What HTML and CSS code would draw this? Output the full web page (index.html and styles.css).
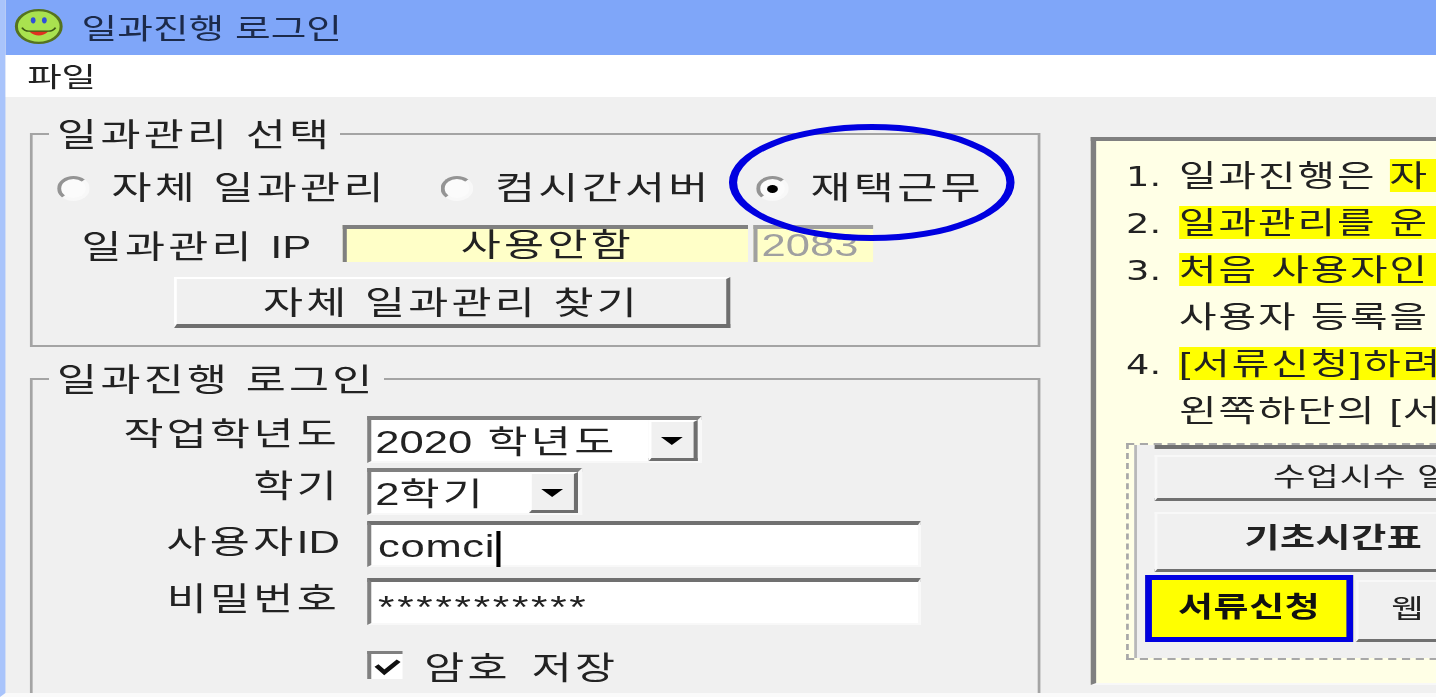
FILE: index.html
```html
<!DOCTYPE html>
<html lang="ko">
<head>
    <meta charset="UTF-8">
    <title>일과진행 로그인</title>
    <link rel="stylesheet" href="styles.css">
</head>
<body>
    <div class="window">
        <div class="title-bar">
            <svg class="smiley" viewBox="0 0 36 36">
                <circle cx="18" cy="18" r="16" fill="#a9e24f" stroke="#55731f" stroke-width="2.2"/>
                <ellipse cx="14" cy="12" rx="1.7" ry="3" fill="#2f4fd8"/>
                <ellipse cx="22" cy="12" rx="1.7" ry="3" fill="#2f4fd8"/>
                <path d="M11 22.5 Q18 31 25 22.5 Z" fill="#e03020"/>
                <path d="M6 19 Q8 22.5 11 22.5 L25 22.5 Q28 22.5 30 19" fill="none" stroke="#3d5a14" stroke-width="1.4"/>
            </svg>
            <span>일과진행 로그인</span>
        </div>
        <div class="menu-bar">파일</div>
        <div class="content">
            <div class="left-col">
                <fieldset class="group">
                    <legend>일과관리 선택</legend>
                    <div class="mode-row">
                        <label class="option"><i class="radio"></i>자체 일과관리</label>
                        <label class="option"><i class="radio"></i>컴시간서버</label>
                        <label class="option"><i class="radio checked"></i>재택근무</label>
                    </div>
                    <div class="ip-row">
                        <span class="ip-label">일과관리 <span class="num">IP</span></span>
                        <div class="ip-box">사용안함</div>
                        <div class="port-box">2083</div>
                    </div>
                    <div class="find-btn">자체 일과관리 찾기</div>
                    <div class="circle"></div>
                </fieldset>

                <fieldset class="group login">
                    <legend>일과진행 로그인</legend>
                    <div class="login-row first">
                        <span class="login-label">작업학년도</span>
                        <div class="combo year"><span class="combo-text"><span class="num">2020</span> 학년도</span><b class="arrow"></b></div>
                    </div>
                    <div class="login-row term-row">
                        <span class="login-label">학기</span>
                        <div class="combo term"><span class="combo-text"><span class="num">2</span>학기</span><b class="arrow"></b></div>
                    </div>
                    <div class="login-row id-row">
                        <span class="login-label flat">사용자<span class="num">ID</span></span>
                        <div class="text-box">comci<i class="caret"></i></div>
                    </div>
                    <div class="login-row pw-row">
                        <span class="login-label flat">비밀번호</span>
                        <div class="text-box stars">***********</div>
                    </div>
                    <label class="save-row">
                        <i class="check">
                            <svg viewBox="0 0 24 24"><path d="M4 11 L10 18 L21 6" fill="none" stroke="#111" stroke-width="4"/></svg>
                        </i>
                        암호 저장
                    </label>
                </fieldset>
            </div>

            <div class="notice">
                <p><span class="no">1.</span>일과진행은 <mark class="long">자</mark></p>
                <p><span class="no">2.</span><mark class="long">일과관리를 운</mark></p>
                <p><span class="no">3.</span><mark class="long">처음 사용자인</mark></p>
                <p><span class="no"></span>사용자 등록을</p>
                <p><span class="no">4.</span><mark class="long">[서류신청]하려</mark></p>
                <p><span class="no"></span>왼쪽하단의 [서</p>
                <div class="sample">
                    <div class="sample-inner">
                        <div class="stub"></div>
                        <div class="sample-btn hours">수업시수 일</div>
                        <div class="sample-btn basic">기초시간표</div>
                        <div class="sample-row">
                            <div class="doc-btn">서류신청</div>
                            <div class="sample-btn web">웹</div>
                        </div>
                    </div>
                </div>
            </div>
        </div>
    </div>
</body>
</html>
```

FILE: styles.css
```css
body, html {
    margin: 0;
    padding: 0;
    overflow: hidden;
    background-color: #f0f0f0;
}

/* 원본 캡처가 가로로 늘어나 있어서 창 전체를 가로로 늘림 */
.window {
    box-sizing: border-box;
    width: 1056px;
    height: 697px;
    display: flex;
    flex-direction: column;
    overflow: hidden;
    transform: scaleX(1.36);
    transform-origin: 0 0;
    filter: blur(0.5px);
    border-left: 4px solid #a9c4fb;
    border-bottom: 4px solid #fafafa;
    background-color: #f0f0f0;
    color: #222;
    font-family: "Liberation Sans", "Noto Sans CJK KR", sans-serif;
    font-size: 32px;
    letter-spacing: 2.4px;
}

.title-bar {
    height: 55px;
    flex: none;
    display: flex;
    align-items: center;
    gap: 13px;
    padding: 0 0 3px 6px;
    box-sizing: border-box;
    background-color: #7fa6f9;
    color: #1c2a4a;
    font-size: 28.5px;
    letter-spacing: 0;
}

.smiley {
    width: 37px;
    height: 37px;
}

.menu-bar {
    height: 42px;
    flex: none;
    line-height: 46px;
    padding-left: 16px;
    background-color: #fff;
    font-size: 27.5px;
    letter-spacing: 0;
}

.content {
    flex: 1;
    min-height: 0;
    display: flex;
    align-items: flex-start;
    gap: 37px;
    padding: 17px 0 0 18px;
    overflow: hidden;
}

.left-col {
    width: 743px;
    flex: none;
}

.group {
    position: relative;
    box-sizing: border-box;
    width: 743px;
    margin: 0;
    padding: 0 0 17px 0;
    border: 2px solid #a4a4a4;
    min-inline-size: 0;
}

.group legend {
    margin-left: 12px;
    padding: 0 6px 0 6px;
    height: 40px;
    line-height: 42px;
}

.login {
    margin-top: 12px;
    height: 400px;
}

.mode-row {
    display: grid;
    grid-template-columns: 282px 232px 1fr;
    height: 40px;
    margin: 14px 0 0 18px;
}

.option {
    display: flex;
    align-items: center;
    gap: 16px;
    line-height: 40px;
    white-space: nowrap;
}

.radio {
    position: relative;
    box-sizing: border-box;
    width: 24px;
    height: 25px;
    flex: none;
    border-radius: 50%;
    border: 3px solid;
    border-color: #949494 #f8f8f8 #f8f8f8 #949494;
    background-color: #fbfbfb;
}

.radio.checked::after {
    content: "";
    position: absolute;
    left: 5px;
    top: 6px;
    width: 8px;
    height: 8px;
    border-radius: 50%;
    background-color: #000;
}

.ip-row {
    display: flex;
    align-items: center;
    height: 37px;
    margin: 17px 0 0 36px;
}

.ip-label {
    width: 192px;
    flex: none;
    white-space: nowrap;
}

.ip-box,
.port-box {
    box-sizing: border-box;
    height: 37px;
    line-height: 33px;
    border-top: 4px solid #808080;
    border-left: 3px solid #808080;
    background-color: #ffffc8;
}

.ip-box {
    width: 298px;
    text-align: center;
}

.port-box {
    width: 88px;
    margin-left: 4px;
    padding-left: 3px;
    color: #a0a0a0;
    letter-spacing: 0;
    border-top-color: #a0a0a0;
    border-left-color: #a0a0a0;
}

.find-btn {
    box-sizing: border-box;
    width: 409px;
    height: 51px;
    margin: 15px 0 0 104px;
    line-height: 48px;
    text-align: center;
    background-color: #f0f0f0;
    border-top: 2px solid #fff;
    border-left: 2px solid #fff;
    border-right: 3px solid #6e6e6e;
    border-bottom: 4px solid #6e6e6e;
}

.circle {
    position: absolute;
    left: 512px;
    top: -30px;
    box-sizing: border-box;
    width: 210px;
    height: 117px;
    border: 6px solid #0000e0;
    border-radius: 50%;
}

.login-row {
    display: grid;
    grid-template-columns: 226px 1fr;
    column-gap: 20px;
    align-items: start;
}

.login-row.first {
    margin-top: 17px;
}

.term-row {
    margin-top: 5px;
}

.id-row {
    margin-top: 6px;
}

.pw-row {
    margin-top: 11px;
}

.login-label {
    text-align: right;
    white-space: nowrap;
    line-height: 36px;
}

.login-label.flat {
    margin-top: 3px;
}

.num {
    letter-spacing: 0;
}

.combo {
    box-sizing: border-box;
    height: 47px;
    display: flex;
    justify-content: space-between;
    align-items: center;
    padding-left: 3px;
    line-height: 41px;
    white-space: nowrap;
    background-color: #fff;
    border-top: 4px solid #808080;
    border-left: 3px solid #808080;
    border-right: 3px solid #f8f8f8;
    border-bottom: 2px solid #f8f8f8;
}

.combo-text {
    padding-top: 3px;
}

.combo.year {
    width: 246px;
}

.combo.term {
    width: 158px;
}

.arrow {
    position: relative;
    box-sizing: border-box;
    width: 36px;
    height: 41px;
    flex: none;
    background-color: #f0f0f0;
    border-top: 2px solid #fff;
    border-left: 2px solid #fff;
    border-right: 3px solid #6e6e6e;
    border-bottom: 3px solid #6e6e6e;
}

.arrow::after {
    content: "";
    position: absolute;
    left: 7px;
    top: 15px;
    border-left: 8px solid transparent;
    border-right: 8px solid transparent;
    border-top: 8px solid #000;
}

.text-box {
    box-sizing: border-box;
    width: 407px;
    height: 46px;
    padding-left: 5px;
    line-height: 43px;
    letter-spacing: 0.5px;
    background-color: #fff;
    border-top: 4px solid #707070;
    border-left: 3px solid #808080;
    border-right: 2px solid #f8f8f8;
    border-bottom: 2px solid #f8f8f8;
}

.text-box.stars {
    height: 47px;
    line-height: 52px;
    font-size: 31px;
    letter-spacing: 2px;
}

.caret {
    display: inline-block;
    width: 3px;
    height: 36px;
    margin-left: 1px;
    vertical-align: middle;
    background-color: #000;
}

.save-row {
    display: flex;
    align-items: center;
    gap: 16px;
    height: 40px;
    margin: 20px 0 0 246px;
    white-space: nowrap;
    word-spacing: 4px;
}

.check {
    box-sizing: border-box;
    width: 26px;
    height: 28px;
    flex: none;
    background-color: #fff;
    border-top: 3px solid #808080;
    border-left: 3px solid #808080;
}

.check svg {
    display: block;
    width: 100%;
    height: 100%;
}

.notice {
    box-sizing: border-box;
    flex: none;
    width: 300px;
    height: 548px;
    margin-top: 23px;
    padding-top: 11px;
    background-color: #ffffe6;
    border-top: 4px solid #808080;
    border-left: 4px solid #808080;
    border-bottom: 2px solid #f8f8f8;
    font-size: 30px;
    letter-spacing: 1.4px;
}

.notice p {
    margin: 0;
    padding-left: 22px;
    height: 47px;
    line-height: 47px;
    white-space: nowrap;
}

.no {
    display: inline-block;
    width: 39px;
    font-family: "DejaVu Sans", sans-serif;
    font-size: 27px;
    letter-spacing: 0;
}

.notice mark {
    background-color: #ffff00;
    color: #222;
}

.notice mark.long {
    padding-right: 40px;
}

.sample {
    box-sizing: border-box;
    width: 290px;
    height: 217px;
    margin: 9px 0 0 22px;
    padding-left: 4px;
    border: 2px dashed #a8a8a8;
    border-right: none;
    background-color: #ffffe6;
    font-size: 26px;
    letter-spacing: 0.6px;
}

.sample-inner {
    height: 100%;
    padding-left: 13px;
    border-left: 2px solid #b8b8b8;
    background-color: #f0f0f0;
}

.stub {
    height: 4px;
    background-color: #707070;
}

.sample-btn {
    box-sizing: border-box;
    border-top: 2px solid #f8f8f8;
    border-left: 2px solid #f8f8f8;
    border-bottom: 3px solid #707070;
    white-space: nowrap;
}

.hours {
    height: 46px;
    margin-top: 6px;
    padding-left: 85px;
    line-height: 40px;
}

.basic {
    height: 60px;
    margin-top: 11px;
    padding-left: 64px;
    line-height: 50px;
    font-size: 28px;
    letter-spacing: 0.4px;
    font-weight: bold;
}

.sample-row {
    display: flex;
    align-items: flex-end;
    margin: 3px 0 0 -7px;
}

.doc-btn {
    box-sizing: border-box;
    width: 153px;
    height: 67px;
    flex: none;
    border: 5px solid #0000e0;
    background-color: #ffff00;
    color: #111;
    line-height: 55px;
    text-align: center;
    font-size: 28px;
    letter-spacing: 0.4px;
    font-weight: bold;
}

.web {
    flex: 1;
    height: 62px;
    margin-left: 2px;
    padding-left: 24px;
    line-height: 54px;
}
```
